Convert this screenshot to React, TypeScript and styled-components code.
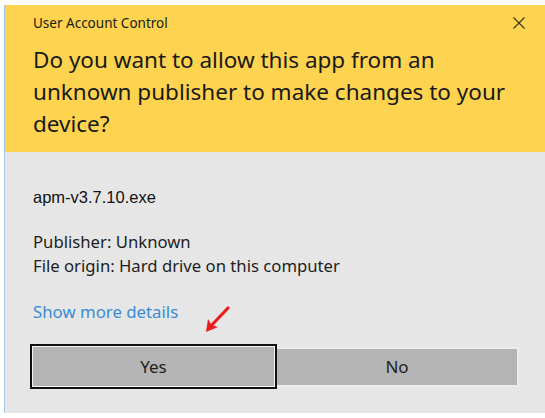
import React from 'react'
import styled, { createGlobalStyle } from 'styled-components'

const Global = createGlobalStyle`
  html, body {
    margin: 0;
    padding: 0;
    background: #ffffff;
  }
  body {
    font-family: "Noto Sans", "Open Sans", sans-serif;
    overflow: hidden;
  }
`

const App = () => {
  return (
    <>
      <Global />
      <Window>
        <Header>
          <TitleBar>
            <Title>User Account Control</Title>
            <Close aria-label="Close">
              <svg width="12" height="12" viewBox="0 0 12 12">
                <path d="M0.5 0.5 L11.5 11.5 M11.5 0.5 L0.5 11.5" stroke="#3a3320" strokeWidth="1.1" fill="none" />
              </svg>
            </Close>
          </TitleBar>
          <Question>Do you want to allow this app from an unknown publisher to make changes to your device?</Question>
        </Header>
        <Body>
          <FileName>apm-v3.7.10.exe</FileName>
          <Info>
            <InfoLine>Publisher: Unknown</InfoLine>
            <InfoLine>File origin: Hard drive on this computer</InfoLine>
          </Info>
          <DetailsRow>
            <MoreLink>Show more details</MoreLink>
            <Arrow width="34" height="30" viewBox="0 0 34 30">
              <path d="M28 3 L10 22" stroke="#ec1c1c" strokeWidth="3.2" strokeLinecap="round" fill="none" />
              <path d="M6 27 L8 14 L11.5 20 L18 22 Z" fill="#ec1c1c" />
            </Arrow>
          </DetailsRow>
          <Buttons>
            <Button $focused>Yes</Button>
            <Button>No</Button>
          </Buttons>
        </Body>
      </Window>
    </>
  )
}

export default App

const Window = styled.div`
  margin: 5px 0 0 4px;
  height: 408px;
  display: flex;
  flex-direction: column;
  border-left: 1px solid #a8c8ea;
`
const Header = styled.div`
  background-color: #fdd34f;
  height: 147px;
  padding: 0 0 0 28px;
  box-sizing: border-box;
`
const TitleBar = styled.div`
  display: flex;
  align-items: center;
  justify-content: space-between;
  height: 35px;
  padding-right: 19px;
`
const Title = styled.div`
  font-size: 13.5px;
  color: #1b1b1b;
`
const Close = styled.div`
  display: flex;
  align-items: center;
  justify-content: center;
  width: 14px;
  height: 14px;
`
const Question = styled.div`
  font-size: 22.5px;
  line-height: 32px;
  color: #1a1a1a;
  width: 488px;
  margin-top: 4px;
`
const Body = styled.div`
  flex: 1;
  background-color: #e6e6e6;
  padding: 35px 0 0 28px;
  display: flex;
  flex-direction: column;
`
const FileName = styled.div`
  font-family: "Liberation Sans", Arial, sans-serif;
  font-size: 16.5px;
  line-height: 20px;
  color: #111;
`
const Info = styled.div`
  margin-top: 23px;
  display: flex;
  flex-direction: column;
`
const InfoLine = styled.div`
  font-size: 16.7px;
  line-height: 24px;
  color: #1e1e1e;
`
const DetailsRow = styled.div`
  margin-top: 24px;
  display: flex;
  align-items: flex-start;
  height: 42px;
`
const MoreLink = styled.div`
  font-size: 16.8px;
  line-height: 20px;
  color: #3b8bd3;
`
const Arrow = styled.svg`
  margin: 3px 0 0 22px;
`
const Buttons = styled.div`
  display: flex;
  align-items: center;
  margin-left: -3px;
`
const Button = styled.div<{ $focused?: boolean }>`
  box-sizing: border-box;
  display: flex;
  align-items: center;
  justify-content: center;
  background-color: #b4b4b4;
  font-size: 17px;
  color: #1e1e1e;
  width: ${p => (p.$focused ? '247px' : '242px')};
  height: ${p => (p.$focused ? '45px' : '40px')};
  border: 2px solid ${p => (p.$focused ? '#111' : '#ececec')};
  box-shadow: ${p => (p.$focused ? 'inset 0 0 0 1px #f4f4f4' : 'none')};
  ${p => (p.$focused ? '' : 'border-left: none;')}
`
